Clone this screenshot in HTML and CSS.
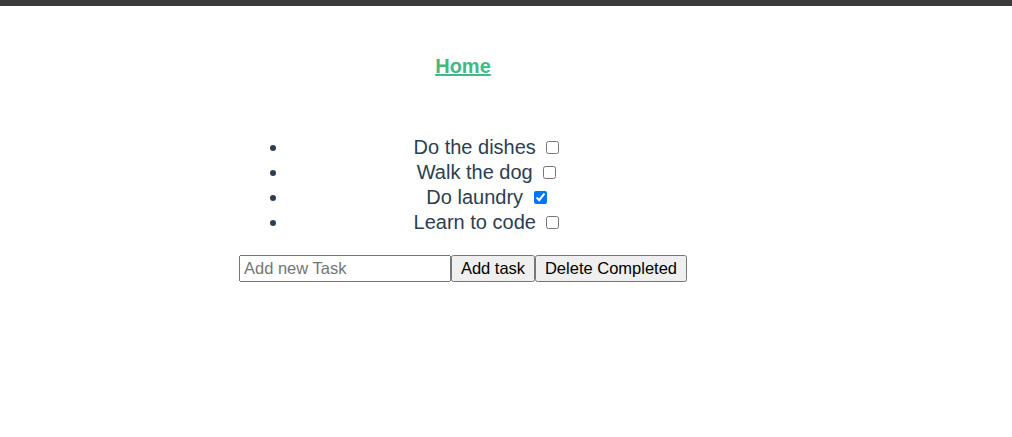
FILE: index.html
```html
<!DOCTYPE html>
<html lang="en">
<head>
<meta charset="utf-8">
<title>Todo</title>
<link rel="stylesheet" href="styles.css">
</head>
<body>
<div class="topbar"></div>
<div class="stage">
  <div class="app">
    <nav class="nav"><a class="nav-link" href="#">Home</a></nav>
    <ul class="tasks">
      <li class="task">Do the dishes <input type="checkbox" class="check"></li>
      <li class="task">Walk the dog <input type="checkbox" class="check"></li>
      <li class="task">Do laundry <input type="checkbox" class="check" checked></li>
      <li class="task">Learn to code <input type="checkbox" class="check"></li>
    </ul>
    <div class="form-row"><input class="task-input" type="text" placeholder="Add new Task"><button class="btn btn-add">Add task</button><button class="btn btn-delete">Delete Completed</button></div>
  </div>
</div>
</body>
</html>
```
FILE: styles.css
```css
html, body {
  margin: 0;
  padding: 0;
  background: #ffffff;
}

body {
  font-family: "Liberation Sans", Arial, Helvetica, sans-serif;
  color: #2c3e50;
}

.topbar {
  height: 6px;
  background: #3b3b3b;
}

.stage {
  display: flex;
  justify-content: center;
  padding-right: 86px;
}

.app {
  width: 448px;
  text-align: center;
}

.nav {
  padding-top: 49px;
  height: 81px;
  box-sizing: border-box;
  font-size: 20px;
  line-height: 23px;
}

.nav-link {
  font-weight: bold;
  color: #42b983;
  text-decoration: underline;
}

.tasks {
  margin: 48px 0 20px 0;
  padding-left: 50px;
  font-size: 20px;
  line-height: 25px;
}

.task {
  list-style: disc;
}

.check {
  width: 13px;
  height: 13px;
  margin: 3px 3px 3px 5px;
}

.form-row {
  display: flex;
  align-items: stretch;
  height: 27px;
}

.task-input {
  box-sizing: border-box;
  width: 212px;
  height: 27px;
  margin: 0;
  padding: 1px 3px;
  font-family: "Liberation Sans", Arial, sans-serif;
  font-size: 16.5px;
  color: #000;
}

.task-input::placeholder {
  color: #757575;
}

.btn {
  box-sizing: border-box;
  height: 27px;
  margin: 0;
  padding: 1px 7px;
  font-family: "Liberation Sans", Arial, sans-serif;
  font-size: 16.5px;
  color: #000;
}

.btn-add {
  width: 84px;
}

.btn-delete {
  width: 152px;
}
```
